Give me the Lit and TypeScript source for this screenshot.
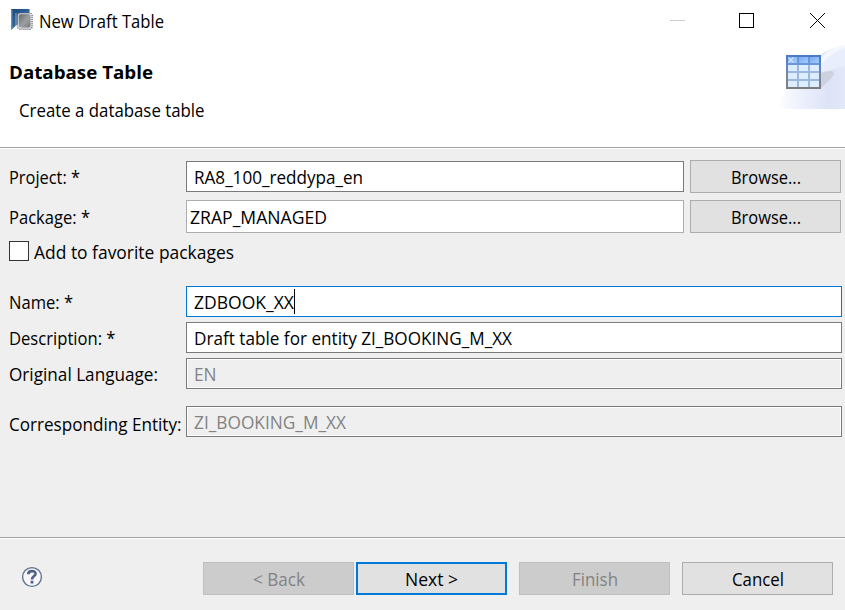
import { LitElement, html, css, svg, nothing } from "lit";
import { customElement, property } from "lit/decorators.js";

/** A single line of text set to an exact advance width. */
@customElement("ui-text")
class UiText extends LitElement {
  @property() text = "";
  @property({ type: Number }) width = 100;

  static styles = css`
    :host { display: block; flex: none; height: 25px; }
    svg { display: block; overflow: visible; }
    text {
      font-family: "Open Sans", "Noto Sans", sans-serif;
      font-size: 17.6px;
      font-weight: var(--weight, 400);
      fill: currentColor;
      white-space: pre;
    }
  `;

  render() {
    return html`<svg width=${this.width} height="25">
      <text x="0" y="20" textLength=${this.width} lengthAdjust="spacingAndGlyphs">${this.text}</text>
    </svg>`;
  }
}

@customElement("ui-button")
class UiButton extends LitElement {
  @property() label = "";
  @property({ type: Number }) width = 60;

  static styles = css`
    :host { display: block; width: 151px; height: 33px; flex: none; }
    .button {
      box-sizing: border-box; width: 100%; height: 100%;
      display: flex; align-items: center; justify-content: center;
      background: #e1e1e1; border: 1px solid #adadad; color: #000;
    }
    :host([primary]) .button { border: 2px solid #0078d7; }
    :host([disabled]) .button { background: #ccc; border-color: #bfbfbf; color: #838383; }
  `;

  render() {
    return html`<div class="button" role="button">
      <ui-text .text=${this.label} .width=${this.width}></ui-text>
    </div>`;
  }
}

@customElement("ui-field")
class UiField extends LitElement {
  @property() value = "";
  @property({ type: Number }) width = 100;
  @property({ type: Boolean, reflect: true }) focused = false;

  static styles = css`
    :host { display: block; height: 31px; }
    .box {
      box-sizing: border-box; height: 100%; padding-left: 7px;
      display: flex; align-items: center;
      background: #fff; border: 1px solid #7a7a7a; color: #000;
    }
    .caret { width: 1px; height: 25px; background: #000; }
    :host([focused]) .box { border-color: #0078d7; }
    :host([combo]) { height: 33px; }
    :host([combo]) .box { border-color: #adadad; padding-left: 3px; }
    :host([readonly]) .box { background: #efefef; color: #838383; box-shadow: inset 0 0 0 1px #fff; }
  `;

  render() {
    return html`<div class="box">
      <ui-text .text=${this.value} .width=${this.width}></ui-text>
      ${this.focused ? html`<span class="caret"></span>` : nothing}
    </div>`;
  }
}

const appIcon = html`<svg class="app-icon" width="24" height="24" viewBox="0 0 24 24">
  <defs>
    <linearGradient id="blue" x1="0" y1="0" x2="1" y2="1">
      <stop offset="0" stop-color="#1b4677" /><stop offset="1" stop-color="#3e82bd" />
    </linearGradient>
    <linearGradient id="chip" x1="0" y1="0" x2="1" y2="1">
      <stop offset="0" stop-color="#63686d" /><stop offset=".55" stop-color="#9da0a3" /><stop offset="1" stop-color="#74787c" />
    </linearGradient>
  </defs>
  <path d="M1 1H19.5V6H9V16L6.5 17L1 22Z" fill="url(#blue)" />
  <path d="M1 1L2.5 2.5V20.5L1 22Z" fill="#5f8fba" />
  <path d="M6 5V17.5" stroke="#8fb2d2" stroke-width="1" />
  <rect x="7.8" y="5.5" width="14" height="15.5" rx="2.5" fill="none" stroke="#6a6e73" stroke-width="2.2" stroke-dasharray="1 1" />
  <rect x="7.8" y="5.3" width="13.6" height="15.2" rx="2.5" fill="#d2d4d6" />
  <rect x="8.8" y="6.3" width="11.6" height="13.2" rx="2" fill="url(#chip)" />
</svg>`;

const columns = [2, 13, 24];
const rows = [10, 18, 26];
const banner = html`<svg class="banner" width="67" height="69" viewBox="0 0 67 69">
  <defs>
    <linearGradient id="sweep" x1="0" y1="0" x2="1" y2="0">
      <stop offset="0" stop-color="#fff" /><stop offset=".22" stop-color="#f2f5fe" />
      <stop offset=".75" stop-color="#dde3f7" /><stop offset="1" stop-color="#e3e9f9" />
    </linearGradient>
    <linearGradient id="frame" x1="0" y1="0" x2="0" y2="1">
      <stop offset="0" stop-color="#4b78c4" /><stop offset=".3" stop-color="#5a85cf" />
      <stop offset=".6" stop-color="#7c8796" /><stop offset="1" stop-color="#7c7c7c" />
    </linearGradient>
    <linearGradient id="head" x1="0" y1="0" x2="1" y2="1">
      <stop offset="0" stop-color="#75aaf2" /><stop offset="1" stop-color="#a5cdfb" />
    </linearGradient>
  </defs>
  <path d="M0 69C7 43 28 14 67 5V69Z" fill="url(#sweep)" />
  <path d="M43 17C49 11 57 7 67 5V26C57 27 49 31 43 35Z" fill="#f4f7fe" />
  <path d="M43 26C49 17 57 11 67 8V26C57 27 49 31 43 35Z" fill="#e8eefb" />
  <path d="M42 33C48 31 54 30 56 33C55 38 48 43 42 49Z" fill="#c8ccd9" opacity=".8" />
  <g transform="translate(8 15)">
    <rect width="35" height="34" fill="url(#frame)" />
    <rect x="2" y="2" width="31" height="30" fill="#6c96dc" />
    <rect x="2" y="10" width="31" height="22" fill="#9db7e0" />
    ${columns.map((x) => svg`<rect x=${x} y="2" width="9" height="6" fill="url(#head)" />`)}
    ${rows.flatMap((y) => columns.map((x) => svg`<rect x=${x} y=${y} width="9" height="6" fill="#dbedff" />`))}
    <path d="M2.5 2.5L7.5 7.5M7.5 2.5L2.5 7.5" stroke="#c7e2ff" stroke-width="1.6" />
  </g>
</svg>`;

@customElement("app-root")
class AppRoot extends LitElement {
  static styles = css`
    :host {
      display: flex; flex-direction: column; box-sizing: border-box;
      width: 845px; height: 610px; overflow: hidden;
      background: #efefef; color: #000;
    }
    .top { box-sizing: border-box; height: 149px; background: #fff; border-bottom: 1px solid #fff; box-shadow: inset 0 -1px #a0a0a0; }
    .titlebar { display: flex; align-items: flex-start; height: 40px; padding: 0 20px 0 10px; }
    .app-icon { margin: 8px 5px 0 0; }
    .titlebar ui-text { margin-top: 8px; }
    .controls { margin: 13px 0 0 auto; display: flex; gap: 56px; }
    .minimize { margin-right: -2px; }
    .intro { display: flex; justify-content: space-between; }
    .copy { padding: 19px 0 0 9px; }
    .heading { --weight: 700; }
    .sub { margin: 13px 0 0 10px; }
    .form { display: grid; grid-template-columns: 177px 1fr; padding: 11px 3px 0 9px; align-items: center; }
    .line { display: flex; align-items: center; gap: 6px; }
    .line ui-field { width: 498px; }
    .first { margin-bottom: 7px; }
    .favorite { grid-column: 1 / -1; display: flex; align-items: center; height: 21px; margin: 8px 0 24px; gap: 5px; }
    .check { box-sizing: border-box; width: 20px; height: 20px; margin-bottom: 1px; border: 1px solid #333; background: #fff; }
    .gap { margin-bottom: 5px; }
    .wide-gap { margin-bottom: 17px; }
    .low { margin-top: 4px; }
    .footer {
      margin-top: auto; box-sizing: border-box; height: 73px; padding: 24px 12px 0 21px;
      border-top: 1px solid #a0a0a0; box-shadow: inset 0 1px #fff;
      display: flex; align-items: flex-start;
    }
    .help { margin-top: 4px; }
    .pair { display: flex; gap: 2px; margin: 0 12px 0 auto; }
    .end { display: flex; gap: 12px; }
  `;

  render() {
    return html`
      <header class="top">
        <div class="titlebar">
          ${appIcon}
          <ui-text .text=${"New Draft Table"} .width=${125}></ui-text>
          <div class="controls">
            <svg class="minimize" width="15" height="15"><path d="M0 7.5H15" stroke="#ccc" /></svg>
            <svg width="15" height="15"><rect x=".5" y=".5" width="14" height="14" fill="none" stroke="#000" /></svg>
            <svg width="15" height="15"><path d="M0 0L15 15M15 0L0 15" stroke="#000" /></svg>
          </div>
        </div>
        <div class="intro">
          <div class="copy">
            <ui-text class="heading" .text=${"Database Table"} .width=${144}></ui-text>
            <ui-text class="sub" .text=${"Create a database table"} .width=${185.5}></ui-text>
          </div>
          ${banner}
        </div>
      </header>

      <main class="form">
        <ui-text class="first" .text=${"Project: *"} .width=${71}></ui-text>
        <div class="line first">
          <ui-field .value=${"RA8_100_reddypa_en"} .width=${169}></ui-field>
          <ui-button .label=${"Browse..."} .width=${70}></ui-button>
        </div>
        <ui-text .text=${"Package: *"} .width=${81}></ui-text>
        <div class="line">
          <ui-field combo .value=${"ZRAP_MANAGED"} .width=${137}></ui-field>
          <ui-button .label=${"Browse..."} .width=${70}></ui-button>
        </div>
        <div class="favorite">
          <span class="check"></span>
          <ui-text .text=${"Add to favorite packages"} .width=${200}></ui-text>
        </div>
        <ui-text class="gap" .text=${"Name: *"} .width=${64}></ui-text>
        <ui-field class="gap" focused .value=${"ZDBOOK_XX"} .width=${100}></ui-field>
        <ui-text class="gap" .text=${"Description: *"} .width=${106.5}></ui-text>
        <ui-field class="gap" .value=${"Draft table for entity ZI_BOOKING_M_XX"} .width=${318}></ui-field>
        <ui-text class="wide-gap" .text=${"Original Language:"} .width=${149}></ui-text>
        <ui-field class="wide-gap" readonly .value=${"EN"} .width=${22.5}></ui-field>
        <ui-text class="low" .text=${"Corresponding Entity:"} .width=${172.5}></ui-text>
        <ui-field readonly .value=${"ZI_BOOKING_M_XX"} .width=${152}></ui-field>
      </main>

      <footer class="footer">
        <svg class="help" width="22" height="22" viewBox="0 0 22 22">
          <circle cx="11" cy="11" r="9.4" fill="#f7f7f9" stroke="#64738f" stroke-width="1.4" />
          <path d="M7.2 8.2C7.4 3.9 14.9 4.1 14.5 8C14.2 10.4 11 10.4 11 13.4" fill="none" stroke="#4f6287" stroke-width="2.7" />
          <rect x="9.6" y="14.8" width="2.8" height="2.7" fill="#4f6287" />
        </svg>
        <div class="pair">
          <ui-button disabled .label=${"< Back"} .width=${52}></ui-button>
          <ui-button primary .label=${"Next >"} .width=${53}></ui-button>
        </div>
        <div class="end">
          <ui-button disabled .label=${"Finish"} .width=${46}></ui-button>
          <ui-button .label=${"Cancel"} .width=${52}></ui-button>
        </div>
      </footer>
    `;
  }
}
